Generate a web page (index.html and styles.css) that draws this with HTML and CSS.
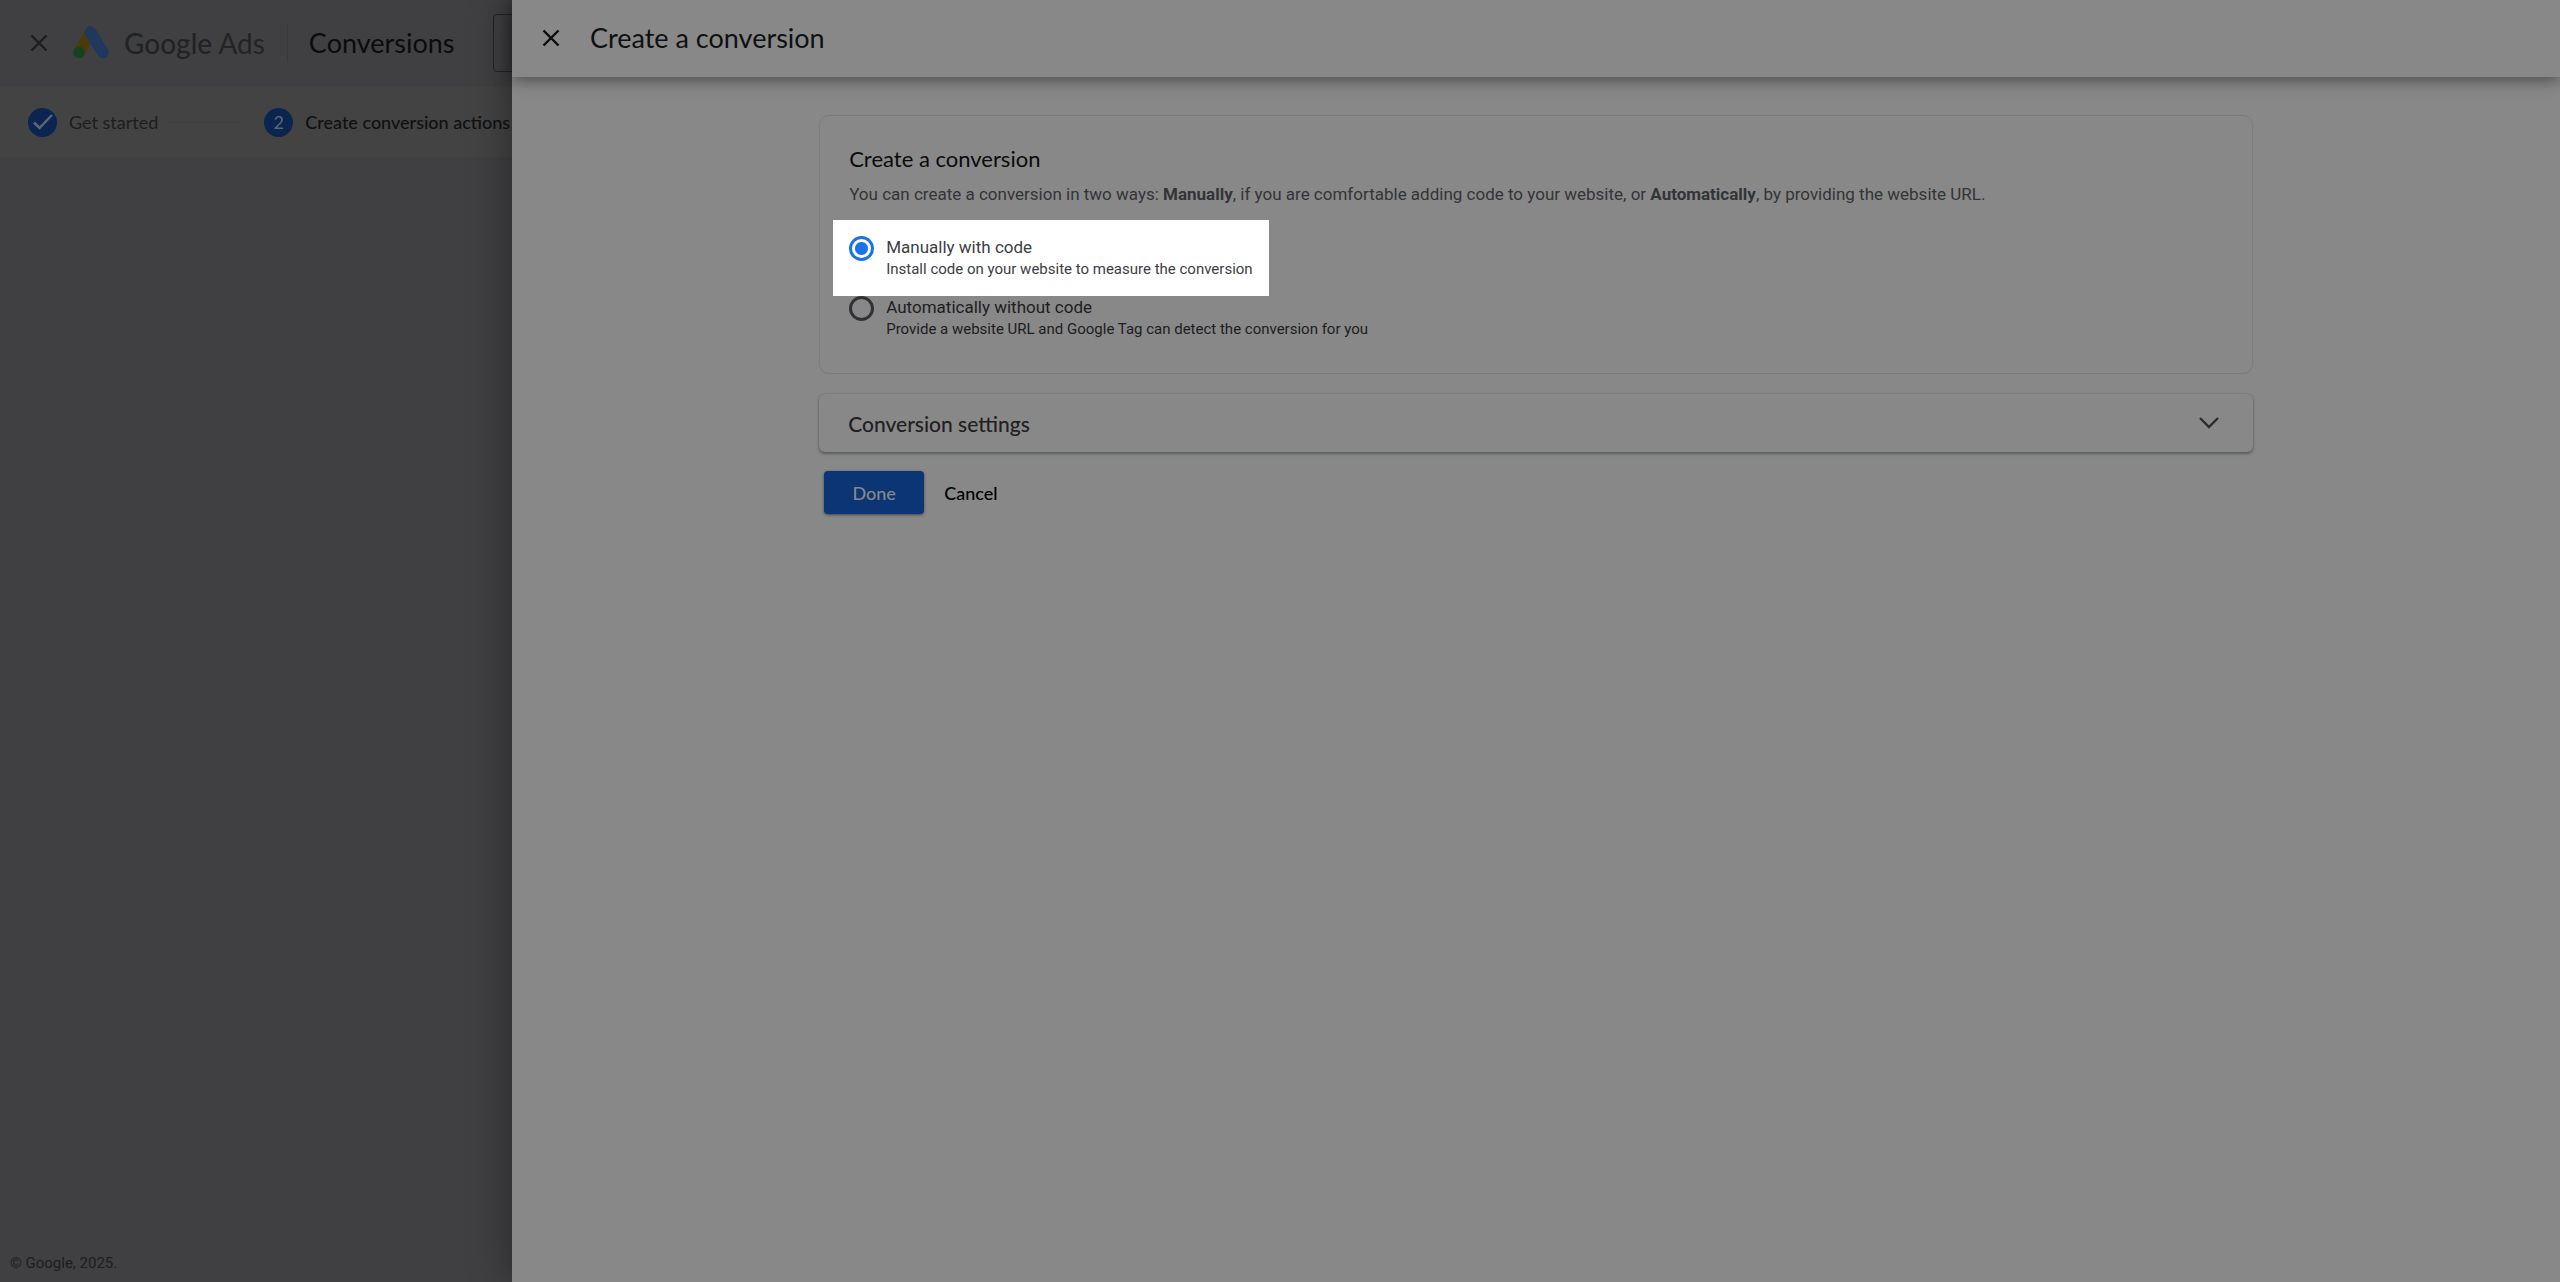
FILE: index.html
```html
<!DOCTYPE html>
<html lang="en">
<head>
    <meta charset="utf-8">
    <title>Conversions - Google Ads</title>
    <meta name="viewport" content="width=device-width, initial-scale=1.0">
    <link rel="stylesheet" href="styles.css">
</head>
<body>
    <div class="app">
        <div class="page">
            <header class="topbar">
                <button class="icon-btn" aria-label="Close">
                    <svg width="18" height="18" viewBox="0 0 18 18"><path d="M1.5 1.5l15 15M16.5 1.5l-15 15"/></svg>
                </button>
                <a class="logo" href="#">
                    <svg width="36" height="33" viewBox="0 0 36 33">
                        <path d="M17.5 6L6 26.5" stroke="#4a3b0c" stroke-width="11.5"/>
                        <path d="M17.5 6L29.900 26.500" stroke="#20375f" stroke-width="11.5" stroke-linecap="round"/>
                        <circle cx="6" cy="26.5" r="5.8" fill="#164222"/>
                    </svg>
                    <span><b>Google</b> Ads</span>
                </a>
                <h1 class="page-title">Conversions</h1>
                <div class="search-box"></div>
            </header>
            <ol class="stepper">
                <li class="step">
                    <span class="step-num">
                        <svg width="22" height="18" viewBox="0 0 22 18"><path d="M2 9.5l5.5 5.500L20 2"/></svg>
                    </span>
                    Get started
                </li>
                <li class="step-line"></li>
                <li class="step active">
                    <span class="step-num">2</span>
                    Create conversion actions
                </li>
            </ol>
            <footer class="footer">© Google, 2025.</footer>
        </div>

        <main class="drawer">
            <header class="drawer-header">
                <button class="icon-btn" aria-label="Close panel">
                    <svg width="18" height="18" viewBox="0 0 18 18"><path d="M1.500 1.500l15 15M16.500 1.500l-15 15"/></svg>
                </button>
                <h2>Create a conversion</h2>
            </header>
            <form class="content">
                <section class="card">
                    <h3>Create a conversion</h3>
                    <p>You can create a conversion in two ways: <b>Manually</b>, if you are comfortable adding code to your website, or <b>Automatically</b>, by providing the website URL.</p>
                    <div class="option highlight">
                        <input type="radio" name="method" id="manual" checked>
                        <label for="manual">Manually with code
                            <small>Install code on your website to measure the conversion</small>
                        </label>
                    </div>
                    <div class="option">
                        <input type="radio" name="method" id="auto">
                        <label for="auto">Automatically without code
                            <small>Provide a website URL and Google Tag can detect the conversion for you</small>
                        </label>
                    </div>
                </section>
                <button type="button" class="settings">
                    Conversion settings
                    <svg width="20" height="12" viewBox="0 0 20 12"><path d="M1 1l9 9 9-9"/></svg>
                </button>
                <div class="actions">
                    <button type="button" class="btn btn-done">Done</button>
                    <button type="button" class="btn btn-cancel">Cancel</button>
                </div>
            </form>
        </main>
    </div>
</body>
</html>
```
FILE: styles.css
```css
* {
    box-sizing: border-box;
}
body {
    margin: 0;
    font-family: Roboto, sans-serif;
    font-size: 17px;
    background: #404042;
    color: #1c1d1f;
}
h1, h2, h3, p, ol {
    margin: 0;
    padding: 0;
    font-weight: 400;
}
button {
    border: none;
    background: none;
    padding: 0;
    cursor: pointer;
}
svg {
    display: block;
    fill: none;
}
.app {
    display: flex;
    min-height: 100vh;
}

/* page behind the drawer */
.page {
    width: 20%;
    display: flex;
    flex-direction: column;
    overflow: hidden;
    white-space: nowrap;
    font-family: Lato, sans-serif;
}
.topbar {
    display: flex;
    align-items: center;
    height: 87px;
    padding: 0 0 2px 30px;
}
.icon-btn svg {
    stroke: #0b0b0c;
    stroke-width: 2.4;
}
.topbar .icon-btn svg {
    stroke: #1c1d1f;
}
.logo {
    display: flex;
    align-items: center;
    gap: 15px;
    margin-left: 25px;
    padding-right: 22px;
    color: #222325;
    font-size: 28px;
    text-decoration: none;
}
.logo b {
    font-weight: 500;
}
.page-title {
    flex: none;
    border-left: 1px solid #38393b;
    padding-left: 21px;
    font-size: 27px;
    line-height: 38px;
    color: #0b0b0c;
}
.search-box {
    flex: none;
    width: 300px;
    height: 58px;
    margin-left: 38px;
    border: 1px solid #222325;
    border-radius: 4px;
}
.stepper {
    display: flex;
    align-items: center;
    height: 70px;
    padding-left: 28px;
    background: #434343;
    list-style: none;
}
.step {
    display: flex;
    align-items: center;
    gap: 12px;
    font-size: 18px;
}
.step.active {
    font-weight: 500;
    color: #0f1011;
}
.step-num {
    display: flex;
    align-items: center;
    justify-content: center;
    width: 29px;
    height: 29px;
    border-radius: 50%;
    background: #0b2450;
    color: #5c6677;
    font-weight: 400;
}
.step-num svg {
    stroke: #5c6677;
    stroke-width: 2.5;
}
.step-line {
    width: 72px;
    height: 1px;
    margin: 0 24px 0 10px;
    background: #3e3e3f;
}
.footer {
    margin-top: auto;
    padding: 0 10px 10px;
    font-family: Roboto, sans-serif;
    font-size: 15px;
    line-height: 18px;
}

/* drawer */
.drawer {
    position: relative;
    flex: 1;
    background: #888;
    box-shadow: 0 0 40px rgba(0, 0, 0, 0.4);
}
.drawer-header {
    display: flex;
    align-items: center;
    gap: 30px;
    height: 77px;
    padding: 0 0 2px 30px;
    box-shadow: 0 2px 16px rgba(0, 0, 0, 0.5);
    color: #0f1011;
}
.drawer-header h2 {
    font-family: Lato, sans-serif;
    font-size: 27px;
}
.content {
    width: 70%;
    margin: 38px auto 0;
}
.card {
    border: 1px solid #7a7b7c;
    border-radius: 10px;
    padding: 28px 29px 34px;
}
.card h3 {
    font-family: Lato, sans-serif;
    font-size: 22px;
    line-height: 30px;
    color: #0b0b0c;
}
.card p {
    margin: 8px 0 14px;
    line-height: 24px;
    color: #333437;
}
.option {
    display: flex;
    align-items: flex-start;
    gap: 12px;
}
.option label {
    line-height: 23px;
}
.option small {
    display: block;
    font-size: 15px;
    line-height: 20px;
}
.option input {
    appearance: none;
    width: 25px;
    height: 25px;
    margin: 0;
    border: 3px solid #303134;
    border-radius: 50%;
}
.option input:checked {
    border-color: #1a73e8;
    background: radial-gradient(circle, #1a73e8 6px, transparent 7px);
}
.highlight {
    width: fit-content;
    height: 76px;
    margin-left: -16px;
    padding: 16px;
    background: #fff;
    color: #3c4043;
}
.settings {
    display: flex;
    align-items: center;
    justify-content: space-between;
    width: 100%;
    height: 58px;
    margin-top: 20px;
    padding: 0 34px 0 29px;
    border-radius: 6px;
    box-shadow: 0 2px 3px rgba(50, 60, 60, 0.5), 0 0 2px rgba(50, 60, 60, 0.3);
    font: 500 21px Lato, sans-serif;
    color: #1f2022;
}
.settings svg {
    stroke: #2c2d30;
    stroke-width: 2.4;
}
.actions {
    display: flex;
    gap: 20px;
    padding: 19px 5px;
}
.btn {
    height: 43px;
    font: 500 18px Lato, sans-serif;
    color: #000;
}
.btn-done {
    width: 100px;
    border-radius: 4px;
    background: #0b3575;
    box-shadow: 0 1px 3px rgba(0, 0, 0, 0.5);
    color: #888;
}
```
